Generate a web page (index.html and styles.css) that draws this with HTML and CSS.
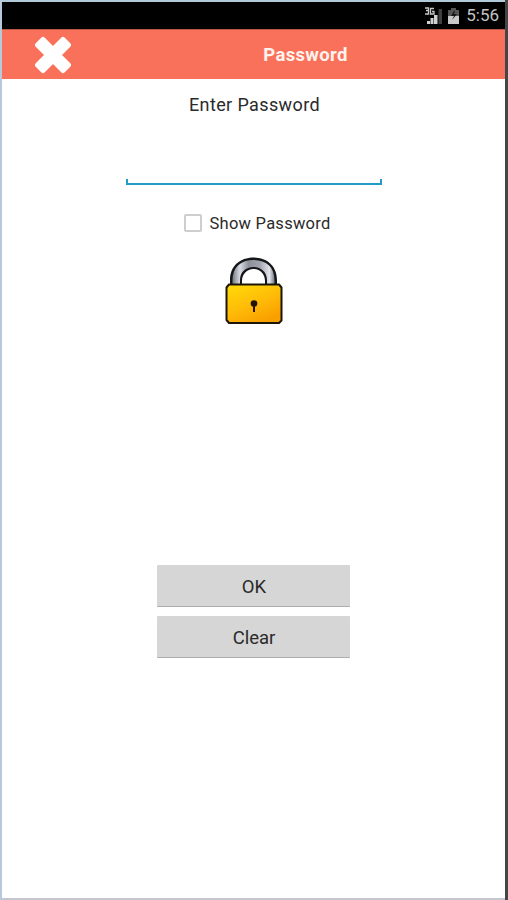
FILE: index.html
```html
<!DOCTYPE html>
<html lang="en">
<head>
<meta charset="utf-8">
<meta name="viewport" content="width=device-width">
<title>Password</title>
<link rel="stylesheet" href="styles.css">
</head>
<body>
<div class="frame">
  <div class="screen">
    <div class="status">
      <svg class="signal" width="19" height="18" viewBox="0 0 19 18" aria-hidden="true">
        <path d="M1 1h3.500v2.500H2M4.500 3.500V7H1M10 1.500H6.500V7H10V4.500H8" fill="none" stroke="#c8c8c8" stroke-width="1.300"/>
        <path d="M3 17v-3h3v3zM6.500 17v-6h3v6zM10 17V8h3.500v9z" fill="#d0d0d0"/>
        <path d="M14.500 17V2H18v15z" fill="#404040"/>
      </svg>
      <svg class="battery" width="13" height="18" viewBox="0 0 13 18" aria-hidden="true">
        <path d="M4 1h5v2h3v6H1V3h3z" fill="#555"/>
        <path d="M1 9h11v8H1z" fill="#c9c9c9"/>
        <path d="M7 4L4 9h3l-2 4 5-6H7l1-3z" fill="#161616"/>
      </svg>
      <span class="clock">5:56</span>
    </div>
    <header class="header">
      <button class="close" aria-label="Close">
        <svg width="38" height="38" viewBox="0 0 38 38">
          <path d="M9 3.500L19 13.500L29 3.500L34.500 9L24.500 19L34.500 29L29 34.500L19 24.500L9 34.500L3.500 29L13.500 19L3.500 9Z" fill="#fff" stroke="#fff" stroke-width="5" stroke-linejoin="round"/>
        </svg>
      </button>
      <h1 class="title">Password</h1>
    </header>
    <main class="content">
      <label class="prompt" for="password">Enter Password</label>
      <input class="field" id="password" type="password">
      <label class="show"><input class="check" type="checkbox"><span class="show-text">Show Password</span></label>
      <svg class="lock" width="60" height="70" viewBox="0 0 60 70" aria-hidden="true">
        <defs>
          <linearGradient id="gold" x1="0" y1="0" x2=".6" y2="1">
            <stop offset="0" stop-color="#ffdc08"/><stop offset=".55" stop-color="#ffbd08"/><stop offset="1" stop-color="#f9a000"/>
          </linearGradient>
          <linearGradient id="steel" x1="0" y1="0" x2="1" y2="0">
            <stop offset="0" stop-color="#777b84"/><stop offset=".18" stop-color="#d9dce4"/><stop offset=".38" stop-color="#8d9199"/><stop offset=".65" stop-color="#a1a4ae"/><stop offset=".88" stop-color="#e2e4ec"/><stop offset="1" stop-color="#777b84"/>
          </linearGradient>
        </defs>
        <path d="M6 32V23C6 9 16 .5 29.500 .5S53 9 53 23v9H41v-8c0-7-5-12-11.500-12S18 17 18 24v8z" fill="#15161a"/>
        <path d="M8.500 31v-8C8.500 10 17 3 29.500 3S50.500 10 50.500 23v8H43v-8c0-8-6-13-13.500-13S16 15 16 23v8z" fill="url(#steel)"/>
        <path d="M5 27.500h50l2.500 3v33L55 66H5l-2.500-3V30.500z" fill="url(#gold)" stroke="#1b1608" stroke-width="2" stroke-linejoin="round"/>
        <circle cx="30" cy="46.500" r="3.300" fill="#211500"/>
        <path d="M29 47h2v8h-2z" fill="#211500"/>
      </svg>
      <div class="actions">
        <button class="button">OK</button>
        <button class="button">Clear</button>
      </div>
    </main>
  </div>
</div>
</body>
</html>
```
FILE: styles.css
```css
* { box-sizing: border-box; }
body { margin: 0; font-family: Roboto, sans-serif; color: #2a2a2a; }
button, input { font: inherit; margin: 0; }
.frame {
  height: 900px;
  padding: 2px 3px 2px 2px;
  background: linear-gradient(90deg, #b8c9dc 0 50%, #454545 50%);
}
.screen {
  height: 896px;
  display: flex;
  flex-direction: column;
  background: #fff;
  box-shadow: 0 -2px #b2c9d7, 0 2px #c6c7ce;
}
.status {
  height: 27px;
  flex: none;
  display: flex;
  justify-content: flex-end;
  align-items: center;
  padding-right: 6px;
  background: #000;
}
.signal { margin-right: 4px; }
.battery { margin-right: 6px; }
.clock { font-size: 17px; line-height: 27px; color: #c4c4c4; }
.header {
  height: 50px;
  flex: none;
  display: flex;
  align-items: center;
  background: #fa715b;
  border-top: 1px solid #bd5647;
}
.close { width: 102px; height: 49px; padding: 0; border: 0; background: none; display: grid; place-items: center; }
.title { margin: 0; flex: 1; text-align: center; font-size: 18.5px; line-height: 24px; font-weight: 700; letter-spacing: .35px; color: #fff3ee; padding-left: 2px; }
.content { flex: 1; display: flex; flex-direction: column; align-items: center; }
.prompt { margin-top: 14px; font-size: 18px; line-height: 24px; letter-spacing: .38px; padding-left: 2px; }
.field {
  width: 256px;
  height: 6px;
  margin-top: 62px;
  padding: 0;
  border: solid #249bc7;
  border-width: 0 2px 2px;
  outline: 0;
  background: none;
}
.show { display: flex; align-items: center; height: 24px; margin-top: 26px; margin-left: 7px; }
.check { appearance: none; width: 18px; height: 18px; border: 2px solid #cecece; border-radius: 2px; margin-right: 8px; background: #fff; }
.show-text { font-size: 16.5px; letter-spacing: .25px; }
.lock { display: block; margin-top: 22px; }
.actions { display: grid; gap: 9px; margin-top: 238px; }
.button {
  width: 193px;
  height: 42px;
  padding: 2px 0 0 1px;
  border: 0;
  border-bottom: 1px solid #adadad;
  border-radius: 1px;
  background: #d6d6d6;
  color: #2a2a2a;
  font-size: 18.5px;
}
```
